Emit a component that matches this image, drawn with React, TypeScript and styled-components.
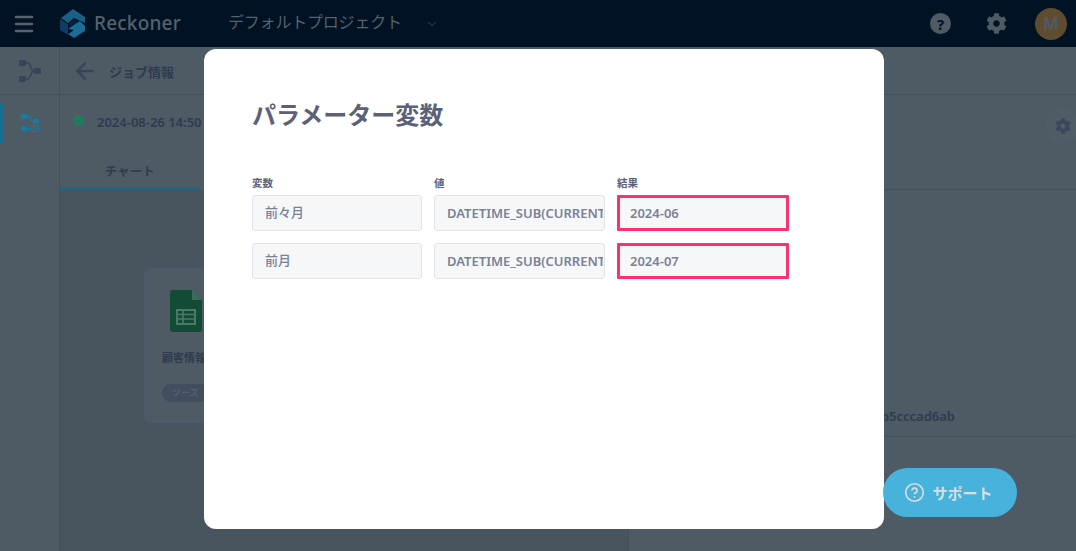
import React from 'react';
import styled, { createGlobalStyle } from 'styled-components';
import { ArrowLeft, Check, ChevronDown, CircleHelp, Menu } from 'lucide-react';
import { FaCog } from 'react-icons/fa';

const GlobalStyle = createGlobalStyle`
  html, body {
    margin: 0;
    padding: 0;
    height: 100%;
  }
  body {
    font-family: "Noto Sans", "Noto Sans CJK JP", sans-serif;
    background: #4e5a64;
    overflow: hidden;
  }
  * {
    box-sizing: border-box;
  }
`;

const Page = styled.div`
  position: relative;
  width: 1076px;
  height: 551px;
  overflow: hidden;
  display: flex;
  flex-direction: column;
  background: #4e5a64;
`;

const Header = styled.header`
  height: 47px;
  flex-shrink: 0;
  background: #001223;
  display: flex;
  align-items: center;
  padding: 0 9px 0 12px;
  color: #56626c;
`;

const MenuButton = styled.div`
  display: flex;
  width: 24px;
  margin-right: 24px;
`;

const Brand = styled.div`
  display: flex;
  align-items: center;
  gap: 8px;
  width: 168px;
`;

const BrandName = styled.span`
  font-size: 19px;
  font-weight: 500;
  color: #56626c;
  letter-spacing: 0.2px;
  padding-bottom: 2px;
`;

const ProjectName = styled.span`
  font-size: 16px;
  color: #56626c;
  width: 197px;
  padding-bottom: 5px;
  letter-spacing: -0.2px;
`;

const HeaderRight = styled.div`
  margin-left: auto;
  display: flex;
  align-items: center;
  color: #4e5a64;
`;

const HelpBadge = styled.div`
  width: 21px;
  height: 21px;
  border-radius: 50%;
  background: #4e5a64;
  color: #001223;
  font-size: 15px;
  font-weight: 700;
  display: flex;
  align-items: center;
  justify-content: center;
  margin-right: 35px;
`;

const Avatar = styled.div`
  width: 32px;
  height: 32px;
  border-radius: 50%;
  background: #5f4c30;
  color: #4e5a64;
  font-size: 17px;
  font-weight: 700;
  display: flex;
  align-items: center;
  justify-content: center;
  margin-left: 28px;
`;

const Body = styled.div`
  flex: 1;
  display: flex;
  min-height: 0;
`;

const Sidebar = styled.nav`
  width: 60px;
  flex-shrink: 0;
  border-right: 1px solid #434f5b;
  display: flex;
  flex-direction: column;
`;

const SideItem = styled.div`
  height: 48px;
  display: flex;
  align-items: center;
  justify-content: center;
  border-bottom: 1px solid #434f5b;
`;

const ActiveSideItem = styled.div`
  height: 40px;
  margin-top: 8px;
  display: flex;
  align-items: center;
  justify-content: center;
  padding-right: 3px;
  border-left: 3px solid #156f93;
`;

const Main = styled.main`
  flex: 1;
  min-width: 0;
  display: flex;
  flex-direction: column;
`;

const TopBar = styled.div`
  height: 48px;
  flex-shrink: 0;
  border-bottom: 1px solid #434f5b;
  display: flex;
  align-items: center;
  padding: 0 12px;
  gap: 11px;
  color: #38445a;
`;

const TopBarTitle = styled.span`
  font-size: 13px;
  font-weight: 700;
  color: #2f3b4e;
  padding-top: 1px;
`;

const Columns = styled.div`
  flex: 1;
  display: flex;
  min-height: 0;
`;

const LeftPane = styled.section`
  width: 569px;
  flex-shrink: 0;
  border-right: 1px solid #434f5b;
  display: flex;
  flex-direction: column;
`;

const JobRow = styled.div`
  height: 47px;
  display: flex;
  align-items: center;
  padding: 4px 13px 0;
  gap: 13px;
`;

const StatusDot = styled.div`
  width: 11px;
  height: 11px;
  border-radius: 50%;
  background: #1c7f5c;
  margin-top: -1px;
  color: #4e5a64;
  display: flex;
  align-items: center;
  justify-content: center;
`;

const JobDate = styled.span`
  font-size: 13px;
  font-weight: 600;
  color: #2f3b4e;
  padding-top: 2px;
`;

const Tabs = styled.div`
  height: 48px;
  flex-shrink: 0;
  display: flex;
`;

const Tab = styled.div`
  width: 140px;
  height: 48px;
  border-bottom: 3px solid #156a8c;
  display: flex;
  align-items: center;
  justify-content: center;
  font-size: 12px;
  font-weight: 700;
  color: #2f3b4e;
  letter-spacing: 0.5px;
  padding-top: 12px;
`;

const Chart = styled.div`
  flex: 1;
  background: #49555e;
  padding: 78px 0 0 84px;
`;

const NodeCard = styled.div`
  width: 130px;
  height: 155px;
  border: 1px solid #4b5a6c;
  border-radius: 6px;
  background: #4e5a64;
  padding: 21px 17px;
`;

const SheetWrap = styled.div`
  margin-left: 8px;
  display: flex;
`;

const NodeName = styled.div`
  font-size: 11px;
  line-height: 16px;
  font-weight: 700;
  color: #2f3b4e;
  margin-top: 18px;
  white-space: nowrap;
`;

const SourceTag = styled.span`
  display: inline-block;
  margin-top: 18px;
  padding: 2px 10px;
  font-size: 9px;
  font-weight: 700;
  color: #56626c;
  background: #424e60;
  border-radius: 9px;
  line-height: 14px;
`;

const RightPane = styled.section`
  flex: 1;
  min-width: 0;
  display: flex;
  flex-direction: column;
`;

const RightTop = styled.div`
  height: 95px;
  flex-shrink: 0;
  border-bottom: 1px solid #434f5b;
  display: flex;
  justify-content: flex-end;
  padding-top: 13px;
`;

const GearCircle = styled.div`
  width: 36px;
  height: 36px;
  border-radius: 50%;
  background: #505c66;
  display: flex;
  align-items: center;
  justify-content: center;
  color: #3b475a;
  margin-right: -5px;
`;

const RightInfo = styled.div`
  height: 247px;
  flex-shrink: 0;
  border-bottom: 1px solid #434f5b;
  margin-right: 1px;
  display: flex;
  align-items: flex-end;
  justify-content: flex-end;
  padding: 0 120px 11px 0;
`;

const JobId = styled.span`
  font-size: 13px;
  font-weight: 600;
  color: #2f3b4e;
`;

const Overlay = styled.div`
  position: absolute;
  inset: 0;
  padding: 49px 0 0 204px;
`;

const Modal = styled.div`
  width: 680px;
  height: 480px;
  background: #fff;
  border-radius: 12px;
  padding: 48px;
`;

const ModalTitle = styled.h2`
  margin: 0 0 43px;
  font-size: 24px;
  line-height: 36px;
  font-weight: 700;
  color: #5a6178;
`;

const ParamTable = styled.div`
  display: grid;
  grid-template-columns: 170px 171px 172px;
  column-gap: 12px;
  row-gap: 12px;
  width: 537px;
`;

const ColumnHead = styled.div`
  font-size: 10.5px;
  line-height: 14px;
  font-weight: 700;
  color: #5a6178;
  margin-bottom: -7px;
`;

const ValueBox = styled.input<{ $highlight?: boolean; $cjk?: boolean }>`
  width: 100%;
  height: 36px;
  margin: 0;
  background: #f6f7f9;
  border: ${p => (p.$highlight ? '3px solid #f8336f' : '1px solid #e0e3e9')};
  border-radius: ${p => (p.$highlight ? '1px' : '3px')};
  padding: 0 1px ${p => (p.$cjk ? '4px' : '0')} ${p => (p.$highlight ? '10px' : '12px')};
  font-family: inherit;
  font-size: 13px;
  font-weight: ${p => (p.$cjk ? 500 : 600)};
  color: #7a8196;
  outline: none;
`;

const SupportButton = styled.div`
  position: absolute;
  left: 883px;
  top: 468px;
  width: 134px;
  height: 49px;
  border-radius: 25px;
  background: #47b2dc;
  color: #d8dfe3;
  display: flex;
  align-items: center;
  justify-content: center;
  gap: 7px;
  font-size: 15px;
  font-weight: 700;
  padding-right: 3px;
`;

const Logo = () => (
  <svg width="26" height="29" viewBox="0 0 26 29">
    <path d="M13 0 25 8v6L14 9l-6 5-7-5Z" fill="#1a5f85" />
    <path d="M0 10l8 5v11l-8-5Z" fill="#0f3c64" />
    <path d="M8 15l6-5 5 3-8 6Z" fill="#04203a" />
    <path d="M8 20l12-8 5 5v5l-11 7-6-4 6-4Z" fill="#1d6c92" />
  </svg>
);

const FlowIcon = () => (
  <svg width="22" height="22" viewBox="0 0 22 22" fill="none">
    <rect x="0" y="0" width="7" height="6" rx="1" fill="#38445a" />
    <rect x="0" y="16" width="7" height="6" rx="1" fill="#38445a" />
    <rect x="15" y="8" width="7" height="6" rx="1" fill="#38445a" />
    <path d="M7 3h2c3 0 2 8 6 8M7 19h2c3 0 2-8 6-8" stroke="#38445a" strokeWidth="1.5" />
  </svg>
);

const FlowV3Icon = () => (
  <svg width="18" height="18" viewBox="0 0 18 18" fill="none">
    <rect x="0" y="0" width="6" height="5" rx="1" fill="#1a7aa0" />
    <rect x="0" y="12" width="6" height="5" rx="1" fill="#1a7aa0" />
    <rect x="12" y="5" width="6" height="5" rx="1" fill="#1a7aa0" />
    <path d="M6 2.500h1c3 0 2 5 5 5M6 14.500h4" stroke="#1a7aa0" strokeWidth="1.500" />
    <rect x="10" y="11.500" width="7.500" height="6" rx="1" stroke="#1a7aa0" />
    <path d="M11.500 13l1.200 3 1.200-3M14.500 13h1.800l-1 1.300 1 1.700h-1.800" stroke="#1a7aa0" strokeWidth=".8" />
  </svg>
);

const SheetIcon = () => (
  <svg width="32" height="42" viewBox="0 0 32 42">
    <path d="M3 0h19l10 10v29a3 3 0 0 1-3 3H3a3 3 0 0 1-3-3V3a3 3 0 0 1 3-3Z" fill="#124c34" />
    <path d="M22 0l10 10H22Z" fill="#3f6b5c" />
    <path d="M7 20h18v14H7Z" fill="none" stroke="#4c7a66" strokeWidth="2" />
    <path d="M7 24.500h18M7 29h18M13 20v14" stroke="#4c7a66" strokeWidth="1.600" />
  </svg>
);

export default function App() {
  const rows = [
    { name: '前々月', value: 'DATETIME_SUB(CURRENT_DATE(), INTERVAL 2 MONTH)', result: '2024-06' },
    { name: '前月', value: 'DATETIME_SUB(CURRENT_DATE(), INTERVAL 1 MONTH)', result: '2024-07' },
  ];

  return (
    <Page>
      <GlobalStyle />
      <Header>
        <MenuButton>
          <Menu size={24} strokeWidth={2.6} />
        </MenuButton>
        <Brand>
          <Logo />
          <BrandName>Reckoner</BrandName>
        </Brand>
        <ProjectName>デフォルトプロジェクト</ProjectName>
        <ChevronDown size={14} strokeWidth={1.2} />
        <HeaderRight>
          <HelpBadge>?</HelpBadge>
          <FaCog size={21} />
          <Avatar>M</Avatar>
        </HeaderRight>
      </Header>
      <Body>
        <Sidebar>
          <SideItem>
            <FlowIcon />
          </SideItem>
          <ActiveSideItem>
            <FlowV3Icon />
          </ActiveSideItem>
        </Sidebar>
        <Main>
          <TopBar>
            <ArrowLeft size={26} strokeWidth={2.2} />
            <TopBarTitle>ジョブ情報</TopBarTitle>
          </TopBar>
          <Columns>
            <LeftPane>
              <JobRow>
                <StatusDot>
                  <Check size={8} strokeWidth={3} />
                </StatusDot>
                <JobDate>2024-08-26 14:50</JobDate>
              </JobRow>
              <Tabs>
                <Tab>チャート</Tab>
              </Tabs>
              <Chart>
                <NodeCard>
                  <SheetWrap>
                    <SheetIcon />
                  </SheetWrap>
                  <NodeName>顧客情報</NodeName>
                  <SourceTag>ソース</SourceTag>
                </NodeCard>
              </Chart>
            </LeftPane>
            <RightPane>
              <RightTop>
                <GearCircle>
                  <FaCog size={16} />
                </GearCircle>
              </RightTop>
              <RightInfo>
                <JobId>b5cccad6ab</JobId>
              </RightInfo>
            </RightPane>
          </Columns>
        </Main>
      </Body>
      <Overlay>
        <Modal>
          <ModalTitle>パラメーター変数</ModalTitle>
          <ParamTable>
            <ColumnHead>変数</ColumnHead>
            <ColumnHead>値</ColumnHead>
            <ColumnHead>結果</ColumnHead>
            {rows.map(row => (
              <React.Fragment key={row.name}>
                <ValueBox readOnly $cjk value={row.name} />
                <ValueBox readOnly value={row.value} />
                <ValueBox readOnly $highlight value={row.result} />
              </React.Fragment>
            ))}
          </ParamTable>
        </Modal>
      </Overlay>
      <SupportButton>
        <CircleHelp size={21} strokeWidth={1.9} />
        サポート
      </SupportButton>
    </Page>
  );
}
